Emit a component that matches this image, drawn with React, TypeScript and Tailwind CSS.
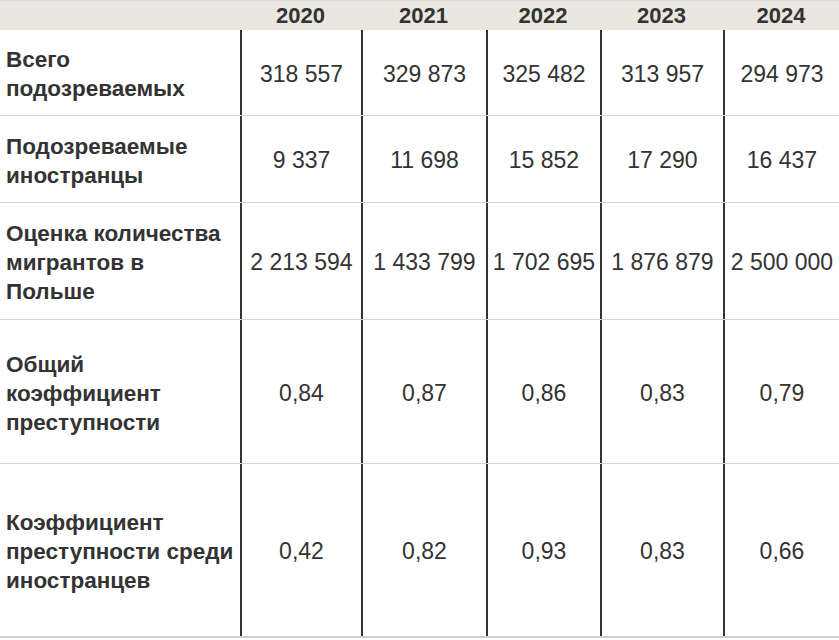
import React from "react";

const years = ["2020", "2021", "2022", "2023", "2024"];

const rows: { label: string[]; values: string[]; h: string }[] = [
  { label: ["Всего", "подозреваемых"], values: ["318 557", "329 873", "325 482", "313 957", "294 973"], h: "h-[86px]" },
  { label: ["Подозреваемые", "иностранцы"], values: ["9 337", "11 698", "15 852", "17 290", "16 437"], h: "h-[87px]" },
  { label: ["Оценка количества", "мигрантов в", "Польше"], values: ["2 213 594", "1 433 799", "1 702 695", "1 876 879", "2 500 000"], h: "h-[117px]" },
  { label: ["Общий", "коэффициент", "преступности"], values: ["0,84", "0,87", "0,86", "0,83", "0,79"], h: "h-[144px]" },
  { label: ["Коэффициент", "преступности среди", "иностранцев"], values: ["0,42", "0,82", "0,93", "0,83", "0,66"], h: "h-[174px]" },
];

const cols = "grid grid-cols-[240px_121px_125px_114px_123px_116px]";

export default function App() {
  return (
    <div className="w-[839px] h-[640px] bg-white text-[#333] overflow-hidden relative" style={{ fontFamily: '"Liberation Sans", Arial, sans-serif' }}>
      <div className={`${cols} h-[30px] bg-[#e9e7df] border-t border-[#dcdcdc]`}>
        <div />
        {years.map((y) => (
          <div key={y} className="flex items-center justify-center font-bold text-[22px] leading-none pt-[1px]">
            {y}
          </div>
        ))}
      </div>
      {rows.map((r, i) => (
        <div
          key={i}
          className={`${cols} ${r.h} ${i === rows.length - 1 ? "border-b-2 border-[#cfcfcf]" : "border-b border-[#d6d6d6]"}`}
        >
          <div className="flex flex-col justify-center pl-[6px] pt-[3px] font-bold text-[22.5px] leading-[29px] whitespace-nowrap">
            {r.label.map((l) => (
              <span key={l}>{l}</span>
            ))}
          </div>
          {r.values.map((v, j) => (
            <div
              key={j}
              className="flex items-center justify-center pt-[3px] border-l-2 border-[#333] text-[23px] leading-none whitespace-nowrap"
            >
              {v}
            </div>
          ))}
        </div>
      ))}
    </div>
  );
}
